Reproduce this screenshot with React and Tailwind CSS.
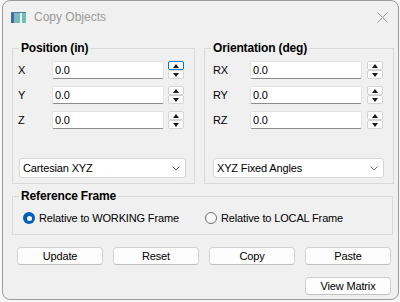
import React from 'react';

const font = { fontFamily: '"Liberation Sans", Arial, sans-serif' };

function Spin({ active }) {
  return (
    <div className="ml-[4px] flex w-[16px] flex-col">
      <div className={`flex h-[9px] items-center justify-center rounded-[2px] border bg-white ${active ? 'border-[#0078d4]' : 'border-[#d4d4d4]'}`}>
        <svg width="6" height="4" viewBox="0 0 6 4"><polygon points="3,0 6,4 0,4" fill="#1a1a1a" /></svg>
      </div>
      <div className="mt-[0px] flex h-[9px] items-center justify-center rounded-[2px] border border-[#d4d4d4] bg-white">
        <svg width="6" height="4" viewBox="0 0 6 4"><polygon points="0,0 6,0 3,4" fill="#1a1a1a" /></svg>
      </div>
    </div>
  );
}

function Row({ label, labelW, active, spinGap }) {
  return (
    <div className="flex h-[18px] items-center">
      <div className="text-[11px] text-black" style={{ width: labelW }}>{label}</div>
      <div className="flex h-[18px] w-[112px] items-center rounded-[2px] border border-[#e3e3e3] border-b-[#8c8c8c] bg-white pl-[2px] text-[11px]">0.0</div>
      <div className={spinGap}>
        <Spin active={active} />
      </div>
    </div>
  );
}

function Select({ text, className }) {
  return (
    <div className={`flex h-[20px] items-center justify-between rounded-[3px] border border-[#d6d6d6] bg-white pl-[3px] pr-[5px] text-[11px] ${className}`}>
      <span>{text}</span>
      <svg width="8" height="5" viewBox="0 0 8 5"><polyline points="0.5,0.5 4,4 7.5,0.5" fill="none" stroke="#6a6a6a" strokeWidth="1" /></svg>
    </div>
  );
}

function Group({ title, className, children }) {
  return (
    <fieldset className={`min-w-0 border border-[#d9d9d9] ${className}`}>
      <legend className="ml-[6px] px-[2px] text-[12px] font-bold leading-[14px] text-black">{title}</legend>
      {children}
    </fieldset>
  );
}

function Btn({ children }) {
  return (
    <button className="flex h-[18px] w-[86px] items-center justify-center rounded-[4px] border border-[#d0d0d0] border-b-[#c2c2c2] bg-[#fdfdfd] text-[11px] text-black">
      {children}
    </button>
  );
}

export default function App() {
  return (
    <div className="h-[302px] w-[400px] bg-[#f7f7f7] tracking-[-0.15px]" style={font}>
      <div className="ml-[2px] flex h-[300px] w-[397px] flex-col rounded-[8px] border border-[#9c9c9c] bg-[#f0f0f0]">
        {/* title bar */}
        <div className="flex h-[32px] items-center pl-[8px] pr-[10px]">
          <svg width="15" height="11" viewBox="0 0 15 11">
            <defs>
              <linearGradient id="ic" x1="0" y1="0" x2="1" y2="1">
                <stop offset="0" stopColor="#7fb2d8" />
                <stop offset="1" stopColor="#6fc2a8" />
              </linearGradient>
            </defs>
            <rect x="0" y="0" width="15" height="11" fill="url(#ic)" />
            <rect x="0" y="0" width="3" height="11" fill="#3e6f9e" />
            <rect x="9" y="1" width="2" height="10" fill="#e9f2f7" />
            <rect x="0" y="0" width="15" height="1" fill="#4c7ba6" />
          </svg>
          <span className="ml-[8px] text-[12px] tracking-normal text-[#9a9a9a]">Copy Objects</span>
          <div className="ml-auto">
            <svg width="11" height="11" viewBox="0 0 11 11">
              <path d="M0.5 0.5 L10.5 10.5 M10.5 0.5 L0.5 10.5" stroke="#9a9a9a" strokeWidth="1" />
            </svg>
          </div>
        </div>

        {/* body */}
        <div className="flex flex-col pl-[9px] pr-[4px] pt-[8px]">
          <div className="flex gap-[9px]">
            <Group title="Position (in)" className="w-[183px]">
              <div className="flex flex-col pb-[5px] pl-[5px] pt-[6px]">
                <div className="flex flex-col gap-[7px]">
                  <Row label="X" labelW={34} active spinGap="" />
                  <Row label="Y" labelW={34} spinGap="" />
                  <Row label="Z" labelW={34} spinGap="" />
                </div>
                <Select text="Cartesian XYZ" className="ml-[1px] mt-[29px] w-[167px]" />
              </div>
            </Group>
            <Group title="Orientation (deg)" className="w-[190px]">
              <div className="flex flex-col pb-[5px] pl-[8px] pt-[6px]">
                <div className="flex flex-col gap-[7px]">
                  <Row label="RX" labelW={37} spinGap="ml-[1px]" />
                  <Row label="RY" labelW={37} spinGap="ml-[1px]" />
                  <Row label="RZ" labelW={37} spinGap="ml-[1px]" />
                </div>
                <Select text="XYZ Fixed Angles" className="mt-[29px] w-[171px]" />
              </div>
            </Group>
          </div>

          <Group title="Reference Frame" className="mt-[5px] w-[381px]">
            <div className="flex h-[14px] items-center pl-[10px] pt-0 mt-[8px] mb-[9px] text-[11px]">
              <div className="flex w-[182px] items-center">
                <span className="flex h-[12px] w-[12px] items-center justify-center rounded-full bg-[#005fb8]">
                  <span className="h-[5px] w-[5px] rounded-full bg-white" />
                </span>
                <span className="ml-[4px]">Relative to WORKING Frame</span>
              </div>
              <div className="flex items-center">
                <span className="h-[12px] w-[12px] rounded-full border border-[#6e6e6e] bg-[#f7f7f7]" />
                <span className="ml-[4px]">Relative to LOCAL Frame</span>
              </div>
            </div>
          </Group>

          <div className="mt-[12px] flex gap-[10px] pl-[5px]">
            <Btn>Update</Btn>
            <Btn>Reset</Btn>
            <Btn>Copy</Btn>
            <Btn>Paste</Btn>
          </div>
          <div className="mt-[12px] flex justify-end pr-[3px]">
            <Btn>View Matrix</Btn>
          </div>
        </div>
      </div>
    </div>
  );
}
